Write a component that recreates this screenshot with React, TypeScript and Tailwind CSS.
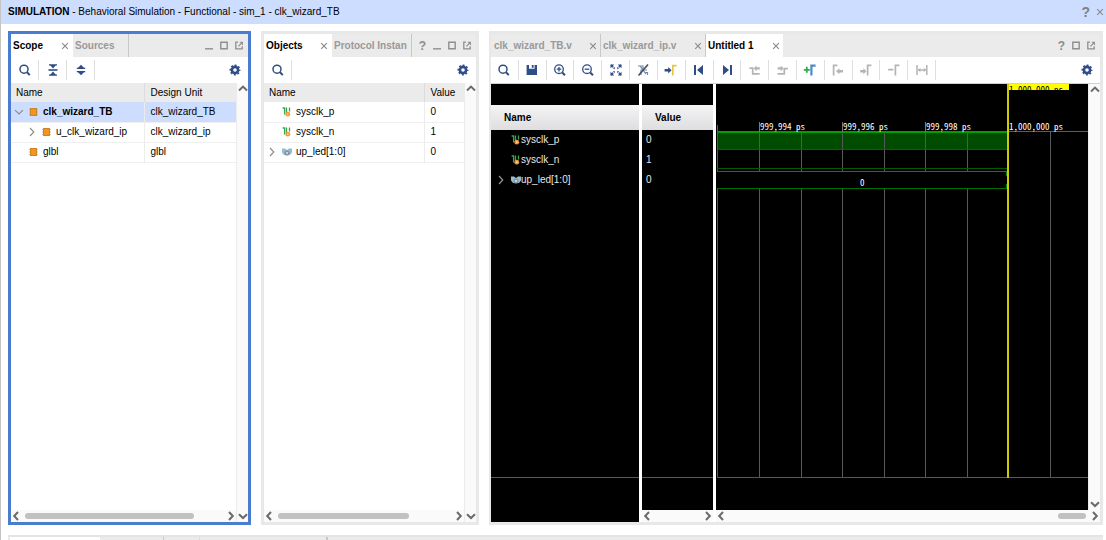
import { ReactNode } from 'react';

const navy = '#2f4d87';
const gray = '#b4b4b4';

function Svg({ w = 14, h = 14, children }: { w?: number; h?: number; children: ReactNode }) {
  return (
    <svg width={w} height={h} viewBox={`0 0 ${w} ${h}`} fill="none" aria-hidden="true" className="shrink-0">
      {children}
    </svg>
  );
}

const SearchIcon = () => (
  <Svg>
    <circle cx="6" cy="6.2" r="4" stroke={navy} strokeWidth="1.5" />
    <path d="M9 9.3l2.8 2.8" stroke={navy} strokeWidth="2" />
  </Svg>
);
const ZoomIcon = ({ plus = false }: { plus?: boolean }) => (
  <Svg>
    <circle cx="6" cy="6.2" r="4.3" stroke={navy} strokeWidth="1.3" />
    <path d="M9.2 9.5l2.8 2.8" stroke={navy} strokeWidth="2" />
    <path d={plus ? 'M3.7 6.2h4.6M6 3.9v4.6' : 'M3.7 6.2h4.6'} stroke={navy} strokeWidth="1.3" />
  </Svg>
);
const CollapseIcon = () => (
  <Svg>
    <path d="M2.5 7h9" stroke={navy} strokeWidth="1.6" />
    <path d="M3 1.8h8M3 12.2h8" stroke={navy} strokeWidth="1.2" />
    <path d="M4 2h6L7 5.4zM4 12h6L7 8.6z" fill={navy} />
  </Svg>
);
const ExpandIcon = () => (
  <Svg>
    <path d="M2.8 5.4h8.4M2.8 8.6h8.4" stroke={navy} strokeWidth="1.4" />
    <path d="M3.6 5.2L7 1.8l3.4 3.4zM3.6 8.8L7 12.2l3.4-3.4z" fill={navy} />
  </Svg>
);
const GearIcon = () => (
  <Svg>
    <circle cx="7" cy="7" r="3.1" stroke={navy} strokeWidth="2.6" />
    <circle cx="7" cy="7" r="4.7" stroke={navy} strokeWidth="1.6" strokeDasharray="2 1.691" strokeDashoffset="1" />
  </Svg>
);
const SaveIcon = () => (
  <Svg>
    <path d="M1.600 2h2.400v3.800h5.600V2h2.400v10H1.600z" fill={navy} />
    <path d="M6.800 2h1.800v2.800H6.800z" fill={navy} />
  </Svg>
);
const FitIcon = () => (
  <Svg>
    <path d="M1.500 5.300V1.500h3.800zM8.700 1.500h3.800v3.800zM1.500 8.700v3.800h3.800zM12.500 8.700v3.800H8.700z" fill={navy} />
    <path d="M2 2l3.600 3.600M12 2L8.400 5.600M2 12l3.600-3.600M12 12L8.400 8.400" stroke={navy} strokeWidth="1.500" strokeDasharray="3 .7 1.400" />
  </Svg>
);
const NoSnapIcon = () => (
  <Svg>
    <path d="M2 3h5v3M5 12V7h6M4 3l6 8M9 9.500h2.500V12" stroke="#6f88b5" strokeWidth="1.200" />
    <path d="M2.500 12.500L12 1.500" stroke="#505050" strokeWidth="1.700" />
  </Svg>
);
const GoCursorIcon = () => (
  <Svg>
    <path d="M.6 6h3.600V3.900L7.600 7.200 4.200 10.500V8.500H.6z" fill={navy} />
    <path d="M8.800 12.600V2.600h3.800" stroke="#e6c545" strokeWidth="1.700" />
  </Svg>
);
const FirstIcon = () => (
  <Svg>
    <path d="M2 2h2v10H2zM11 2v10L5 7z" fill={navy} />
  </Svg>
);
const LastIcon = () => (
  <Svg>
    <path d="M10 2h2v10h-2zM3 2v10l6-5z" fill={navy} />
  </Svg>
);
const PrevEdgeIcon = () => (
  <Svg>
    <path d="M1.500 5.200h3.200v5.600h7" stroke={gray} strokeWidth="1.700" />
    <path d="M5.600 5.400L8.600 2.600v1.700h3.200v2.200H8.600v1.700z" fill={gray} />
  </Svg>
);
const NextEdgeIcon = () => (
  <Svg>
    <path d="M1.500 10.800h6.800V5.600h3.600" stroke={gray} strokeWidth="1.700" />
    <path d="M7.600 5.400L4.800 2.600v1.700H1.600v2.200h3.200v1.700z" fill={gray} />
  </Svg>
);
const AddMarkerIcon = () => (
  <Svg>
    <path d="M.8 6.800h6M3.800 3.800v6" stroke="#35a845" strokeWidth="1.800" />
    <path d="M8.400 12.600V2.600h4.200" stroke="#4a8cc4" strokeWidth="2.200" />
  </Svg>
);
const PrevMarkerIcon = () => (
  <Svg>
    <path d="M2.600 12.600V2.400h3.800" stroke={gray} strokeWidth="1.700" />
    <path d="M5 8.200L8.400 5.200v1.800h3.600v2.400H8.400v1.800z" fill={gray} />
  </Svg>
);
const NextMarkerIcon = () => (
  <Svg>
    <path d="M8.600 12.600V2.400h3.800" stroke={gray} strokeWidth="1.700" />
    <path d="M7.400 8.200L4.400 5.200v1.800H1.200v2.400h3.200v1.800z" fill={gray} />
  </Svg>
);
const RemoveMarkerIcon = () => (
  <Svg>
    <path d="M1.200 6.600h5.200M8.400 12.600V2.400h4" stroke={gray} strokeWidth="1.700" />
  </Svg>
);
const SwapIcon = () => (
  <Svg>
    <path d="M2 2v10M11.800 2v10" stroke={gray} strokeWidth="1.500" />
    <path d="M3 7h8" stroke={gray} strokeWidth="1.400" />
    <path d="M3 7l2.400-2.200v4.400zM11 7L8.600 4.800v4.400z" fill={gray} />
  </Svg>
);
const CloseIcon = () => (
  <Svg w={8} h={8}>
    <path d="M1.200 1.200l5.600 5.600M6.800 1.200L1.200 6.800" stroke="#8c8c8c" strokeWidth="1.200" />
  </Svg>
);
const MinIcon = () => (
  <Svg w={8} h={9}>
    <path d="M0 7.800h8" stroke="#9a9a9a" strokeWidth="1.600" />
  </Svg>
);
const MaxIcon = () => (
  <Svg w={8} h={9}>
    <path d="M.8 1.200h6.400v6.600H.8z" stroke="#8f8f8f" strokeWidth="1.400" />
  </Svg>
);
const PopIcon = () => (
  <Svg w={8} h={9}>
    <path d="M3 1.200H.8v6.600h6.400V5.200" stroke="#8f8f8f" strokeWidth="1.300" />
    <path d="M3.400 5.400L7 1.600M4.800 1.200h2.600V4" stroke="#8f8f8f" strokeWidth="1.100" />
  </Svg>
);
const Chevron = ({ d, color = '#6a6a6a', width = 2 }: { d: 'up' | 'down' | 'left' | 'right'; color?: string; width?: number }) => {
  const paths = { up: 'M1 6.400L5 2.600l4 3.800', down: 'M1 3.200L5 7l4-3.800', left: 'M7 1L3.200 5 7 9', right: 'M3 1l3.800 4L3 9' };
  return (
    <Svg w={10} h={10}>
      <path d={paths[d]} stroke={color} strokeWidth={width} />
    </Svg>
  );
};
const ChipIcon = () => (
  <Svg w={10} h={10}>
    <path d="M.4 2.300h8.200M.4 5h8.200M.4 7.700h8.200" stroke="#8d8672" strokeWidth="1" />
    <path d="M1.500 1.500h6v7h-6z" fill="#f7941d" stroke="#c98224" strokeWidth="1" />
  </Svg>
);
const SignalIcon = () => (
  <Svg w={10} h={10}>
    <path d="M.6 1h2v6.500M4.500 6.500V1M3.900 1.200H5M7.500 .600v4" stroke="#37a552" strokeWidth="1.300" />
    <circle cx="5.800" cy="7.200" r="2.400" fill="#f39a36" />
    <circle cx="5.800" cy="7.200" r=".8" fill="#ffdca8" />
  </Svg>
);
const BusIcon = () => (
  <Svg w={10} h={10}>
    <path d="M0 1.500h3L5 3l2-1.500h3v4L8 8H2L0 5.500z" fill="#93bdd3" />
    <circle cx="5" cy="6" r="2.600" fill="#8c9299" />
    <circle cx="5" cy="6" r="1" fill="#dfe4e8" />
  </Svg>
);

function ToolBar({ items, width }: { items: [string, ReactNode][]; width: string }) {
  return (
    <div className="flex h-[26px] shrink-0 items-center bg-white">
      <div className={`flex shrink-0 ${width}`}>
        {items.map(([label, icon]) => (
          <button
            key={label}
            type="button"
            aria-label={label}
            className="flex h-5 min-w-0 flex-1 items-center justify-center border-r border-[#dedede]"
          >
            {icon}
          </button>
        ))}
      </div>
      <button type="button" aria-label="Settings" className="mr-1.5 ml-auto">
        <GearIcon />
      </button>
    </div>
  );
}

function WindowButtons({ help = false, min = false }: { help?: boolean; min?: boolean }) {
  return (
    <div className="ml-auto flex items-center gap-[7px] pr-[5px]">
      {help && <button type="button" className="text-xs font-bold text-[#8c8c8c]">?</button>}
      {min && <button type="button" aria-label="Minimize"><MinIcon /></button>}
      <button type="button" aria-label="Maximize"><MaxIcon /></button>
      <button type="button" aria-label="Float"><PopIcon /></button>
    </div>
  );
}

function Tab({ label, active = false, closable = true, className }: { label: string; active?: boolean; closable?: boolean; className: string }) {
  return (
    <div className={`flex h-full shrink-0 items-center justify-between font-bold ${active ? 'bg-white text-black' : 'text-[#999]'} ${className}`}>
      <button type="button" className="whitespace-nowrap">{label}</button>
      {closable && <button type="button" aria-label={`Close ${label}`}><CloseIcon /></button>}
    </div>
  );
}

function VScroll() {
  return (
    <div className="flex w-3 shrink-0 flex-col items-center justify-between border-l border-[#ececec] bg-[#fafafa] py-px">
      <Chevron d="up" />
      <Chevron d="down" />
    </div>
  );
}

function HScroll({ thumb }: { thumb?: string }) {
  return (
    <div className="flex h-3 shrink-0 items-center bg-[#fafafa]">
      <Chevron d="left" />
      <div className="flex grow px-1">
        {thumb && <div className={`h-1.5 rounded-full bg-[#c1c1c1] ${thumb}`} />}
      </div>
      <Chevron d="right" />
    </div>
  );
}

type Row = { icon: ReactNode; name: string; value: string; indent: string; chevron?: 'down' | 'right'; selected?: boolean };

function TreeTable({ columns, rows, valueWidth, thumb }: { columns: [string, string]; rows: Row[]; valueWidth: string; thumb: string }) {
  return (
    <div className="flex min-h-0 grow">
      <div className="flex min-w-0 grow flex-col">
        <table className="w-full table-fixed border-collapse text-left">
          <thead>
            <tr className="h-[19px] bg-[#ebebeb]">
              <th className="py-0 pl-[5px] font-normal">{columns[0]}</th>
              <th className={`border-l border-[#dcdcdc] py-0 pl-1.5 font-normal ${valueWidth}`}>{columns[1]}</th>
            </tr>
          </thead>
          <tbody>
            {rows.map((r) => (
              <tr key={r.name} className={`h-5 border-b border-[#efefef] ${r.selected ? 'bg-[#ccddff]' : ''}`}>
                <td className="p-0">
                  <div className={`flex items-center ${r.indent}`}>
                    <span className="flex w-[15px]">{r.chevron && <Chevron d={r.chevron} color="#8a8a8a" width={1.1} />}</span>
                    {r.icon}
                    <span className={`pl-1 ${r.selected ? 'font-bold' : ''}`}>{r.name}</span>
                  </div>
                </td>
                <td className="border-l border-[#ececec] py-0 pl-1.5">{r.value}</td>
              </tr>
            ))}
          </tbody>
        </table>
        <div className="grow" />
        <HScroll thumb={thumb} />
      </div>
      <VScroll />
    </div>
  );
}

const signals = [
  { name: 'sysclk_p', value: '0', icon: <SignalIcon /> },
  { name: 'sysclk_n', value: '1', icon: <SignalIcon /> },
  { name: 'up_led[1:0]', value: '0', icon: <BusIcon />, bus: true },
];

const ticks = [1, 43, 85, 126, 168, 209, 251, 334];
const labels: [number, string][] = [[43, '999,994 ps'], [126, '999,996 ps'], [209, '999,998 ps'], [292, '1,000,000 ps']];

function Waveform() {
  return (
    <svg className="h-full w-full bg-black font-['Noto_Sans_Mono_CJK_SC','Liberation_Mono',monospace] text-[9px]" role="img" aria-label="Waveform">
      <rect x="292" y="0" width="61" height="6" fill="#ffff00" />
      <svg x="292" y="0" width="61" height="6"><text x="1" y="9" fill="#000">1,000,000 ps</text></svg>
      <rect x="1" y="47" width="371" height="1" fill="#5c5c5c" />
      <rect x="1" y="41" width="1" height="7" fill="#5c5c5c" />
      <rect x="1" y="48" width="291" height="18" fill="#004d00" />
      {ticks.map((x) => <rect key={x} x={x} y="48" width="1" height="346" fill="#585858" />)}
      {labels.map(([x, t]) => (
        <g key={t}>
          <rect x={x} y="38" width="1" height="10" fill="#7a7a7a" />
          <text x={x + 1} y="46" fill="#fff">{t}</text>
        </g>
      ))}
      <rect x="1" y="48" width="291" height="1" fill="#00a000" />
      <rect x="1" y="65" width="291" height="1" fill="#006a00" />
      <rect x="1" y="84" width="291" height="1" fill="#005a00" />
      <rect x="1" y="87" width="291" height="18" fill="#000" />
      <rect x="1" y="87" width="291" height="1" fill="#008a00" />
      <rect x="1" y="104" width="291" height="1" fill="#007000" />
      <path d="M290.500 88v4M290.500 100v4" stroke="#008a00" fill="none" />
      <text x="144" y="102" fill="#fff">0</text>
      <rect x="1" y="393" width="371" height="1" fill="#585858" />
      <rect x="291" y="0" width="2" height="394" fill="#d0ca00" />
    </svg>
  );
}

export default function App() {
  return (
    <div className="flex h-screen flex-col overflow-hidden border-l border-[#c4c4c4] bg-white font-['Liberation_Sans',Arial,sans-serif] text-[10px] leading-4 text-black">
      <header className="flex h-6 shrink-0 items-center bg-[#ccddff] pr-0.5 pl-[7px]">
        <h1 className="grow"><b>SIMULATION</b> - Behavioral Simulation - Functional - sim_1 - clk_wizard_TB</h1>
        <button type="button" className="mr-1.5 text-sm font-bold text-[#808080]">?</button>
        <button type="button" aria-label="Close"><CloseIcon /></button>
      </header>

      <main className="flex min-h-0 grow gap-2.5 pt-[7px] pr-[3px] pl-[7px]">
        <section className="flex w-[243px] shrink-0 flex-col border-3 border-[#4a7dd0]">
          <div className="flex h-[23px] shrink-0 items-center bg-[#ebebeb]">
            <Tab label="Scope" active className="w-[62px] pr-1 pl-0.5" />
            <Tab label="Sources" closable={false} className="w-14 border-r border-[#c8c8c8] pl-0.5" />
            <WindowButtons min />
          </div>
          <ToolBar width="w-[84px]" items={[['Search', <SearchIcon />], ['Collapse all', <CollapseIcon />], ['Expand all', <ExpandIcon />]]} />
          <TreeTable
            columns={['Name', 'Design Unit']}
            valueWidth="w-[92px]"
            thumb="w-[86%]"
            rows={[
              { icon: <ChipIcon />, name: 'clk_wizard_TB', value: 'clk_wizard_TB', indent: 'pl-[3px]', chevron: 'down', selected: true },
              { icon: <ChipIcon />, name: 'u_clk_wizard_ip', value: 'clk_wizard_ip', indent: 'pl-4', chevron: 'right' },
              { icon: <ChipIcon />, name: 'glbl', value: 'glbl', indent: 'pl-[3px]' },
            ]}
          />
        </section>

        <section className="flex w-[218px] shrink-0 flex-col border-3 border-[#e8e8e8]">
          <div className="flex h-[23px] shrink-0 items-center bg-[#ebebeb]">
            <Tab label="Objects" active className="w-[68px] pr-1 pl-0.5" />
            <Tab label="Protocol Instan" closable={false} className="w-20 border-r border-[#c8c8c8] pl-0.5" />
            <WindowButtons help min />
          </div>
          <ToolBar width="w-7" items={[['Search objects', <SearchIcon />]]} />
          <TreeTable
            columns={['Name', 'Value']}
            valueWidth="w-10"
            thumb="w-[76%]"
            rows={[
              { icon: <SignalIcon />, name: 'sysclk_p', value: '0', indent: 'pl-[3px]' },
              { icon: <SignalIcon />, name: 'sysclk_n', value: '1', indent: 'pl-[3px]' },
              { icon: <BusIcon />, name: 'up_led[1:0]', value: '0', indent: 'pl-[3px]', chevron: 'right' },
            ]}
          />
        </section>

        <section className="flex min-w-0 grow flex-col border-3 border-l-2 border-[#e8e8e8]">
          <div className="flex h-[23px] shrink-0 items-center bg-[#ebebeb]">
            <Tab label="clk_wizard_TB.v" className="w-[110px] border-r border-[#c8c8c8] pr-[3px] pl-[3px]" />
            <Tab label="clk_wizard_ip.v" className="w-[105px] border-r border-[#c8c8c8] pr-[3px] pl-0.5" />
            <Tab label="Untitled 1" active className="w-[77px] pr-[3px] pl-0.5" />
            <WindowButtons help />
          </div>
          <ToolBar
            width="w-[445px]"
            items={[
              ['Search waveform', <SearchIcon />],
              ['Save', <SaveIcon />],
              ['Zoom in', <ZoomIcon plus />],
              ['Zoom out', <ZoomIcon />],
              ['Zoom fit', <FitIcon />],
              ['Snap', <NoSnapIcon />],
              ['Go to cursor', <GoCursorIcon />],
              ['Go to start', <FirstIcon />],
              ['Go to end', <LastIcon />],
              ['Previous transition', <PrevEdgeIcon />],
              ['Next transition', <NextEdgeIcon />],
              ['Add marker', <AddMarkerIcon />],
              ['Previous marker', <PrevMarkerIcon />],
              ['Next marker', <NextMarkerIcon />],
              ['Remove marker', <RemoveMarkerIcon />],
              ['Swap cursors', <SwapIcon />],
            ]}
          />
          <div className="flex min-h-0 grow gap-[3px] border-t border-[#d0d0d0]">
            <div className="flex w-[148px] shrink-0 flex-col bg-black text-[#e8e8e8]">
              <div className="mt-[21px] flex h-[25px] shrink-0 items-center bg-linear-to-b from-[#f4f4f5] to-[#dedee0] pl-[13px] font-bold text-black">Name</div>
              {signals.map((s) => (
                <div key={s.name} className="flex h-5 shrink-0 items-center pl-[5px]">
                  <span className="flex w-[15px]">{s.bus && <Chevron d="right" color="#9a9a9a" width={1.1} />}</span>
                  {s.icon}
                  <span>{s.name}</span>
                </div>
              ))}
              <div className="grow" />
              <div className="h-[45px] shrink-0 border-t border-[#585858]" />
            </div>
            <div className="flex w-[71px] shrink-0 flex-col bg-black text-[#e8e8e8]">
              <div className="mt-[21px] flex h-[25px] shrink-0 items-center bg-linear-to-b from-[#f4f4f5] to-[#dedee0] pl-[13px] font-bold text-black">Value</div>
              {signals.map((s) => <div key={s.name} className="flex h-5 shrink-0 items-center pl-1">{s.value}</div>)}
              <div className="grow" />
              <div className="h-[33px] shrink-0 border-t border-[#585858]" />
              <HScroll />
            </div>
            <div className="flex min-w-0 grow flex-col">
              <div className="flex min-h-0 grow">
                <div className="min-w-0 grow bg-black"><Waveform /></div>
                <VScroll />
              </div>
              <HScroll thumb="ml-auto w-7" />
            </div>
          </div>
        </section>
      </main>

      <footer className="mt-2.5 mr-[3px] ml-[7px] flex h-[5px] shrink-0 border-t-2 border-[#e4e4e4] bg-[#ebebeb] pl-0.5">
        <div className="w-[90px] bg-white" />
        <div className="w-16 border-r border-[#c8c8c8]" />
        <div className="w-9 border-r border-[#dcdcdc]" />
        <div className="w-32 border-r-2 border-[#c8c8c8]" />
      </footer>
    </div>
  );
}
